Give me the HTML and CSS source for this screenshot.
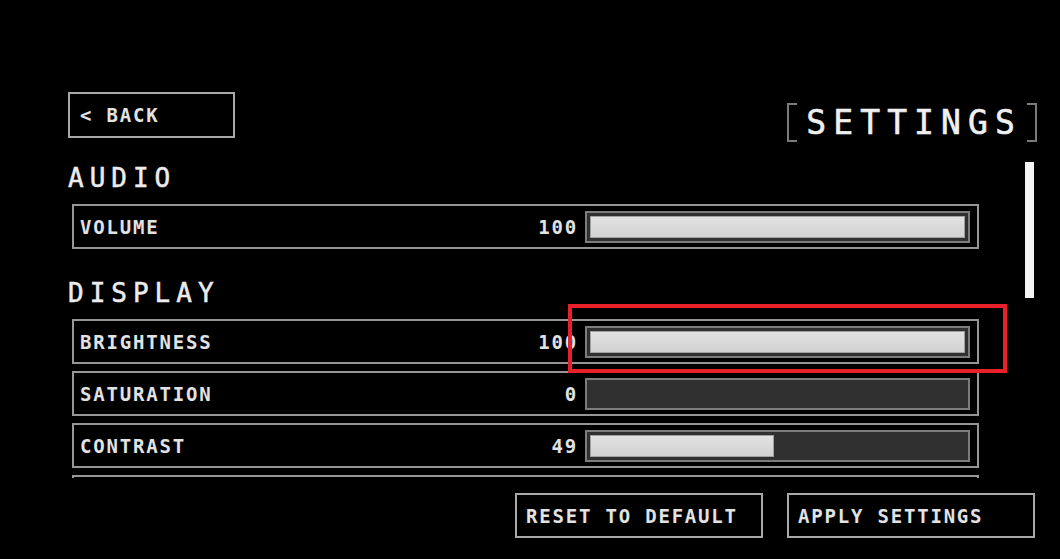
FILE: index.html
```html
<!DOCTYPE html>
<html lang="en">
<head>
<meta charset="utf-8">
<title>Settings</title>
<link rel="stylesheet" href="styles.css">
</head>
<body>
<div class="page">
  <header class="header">
    <button class="btn back-btn"><span class="chev">&lt;</span> BACK</button>
    <h1 class="title">SETTINGS</h1>
  </header>

  <main class="main">
    <div class="scroll">
      <section class="section">
        <h2 class="heading">AUDIO</h2>
        <div class="rows">
          <div class="row">
            <span class="label">VOLUME</span>
            <span class="value">100</span>
            <div class="track"><div class="fill" style="width:100%"></div></div>
          </div>
        </div>
      </section>

      <section class="section section-display">
        <h2 class="heading">DISPLAY</h2>
        <div class="rows">
          <div class="row">
            <span class="label">BRIGHTNESS</span>
            <span class="value">100</span>
            <div class="track"><div class="fill" style="width:100%"></div></div>
          </div>
          <div class="row">
            <span class="label">SATURATION</span>
            <span class="value">0</span>
            <div class="track"><div class="fill fill-empty" style="width:0%"></div></div>
          </div>
          <div class="row">
            <span class="label">CONTRAST</span>
            <span class="value">49</span>
            <div class="track"><div class="fill" style="width:49%"></div></div>
          </div>
          <div class="row row-cut"></div>
        </div>
      </section>
    </div>
    <div class="scrollbar"></div>
  </main>

  <footer class="footer">
    <button class="btn action-btn">RESET TO DEFAULT</button>
    <button class="btn action-btn">APPLY SETTINGS</button>
  </footer>

  <div class="highlight"></div>
</div>
</body>
</html>
```

FILE: styles.css
```css
* { box-sizing: border-box; }

html, body {
  margin: 0;
  padding: 0;
  background: #000;
}

body {
  width: 1060px;
  height: 559px;
  overflow: hidden;
  font-family: "DejaVu Sans Mono", "Liberation Mono", monospace;
  color: #e6e6e6;
}

.page {
  position: relative;
  padding: 92px 25px 0 68px;
}

.header {
  display: flex;
  justify-content: space-between;
  align-items: flex-start;
  height: 48px;
}

.btn {
  font-family: "DejaVu Sans Mono", "Liberation Mono", monospace;
  font-size: 19px;
  font-weight: bold;
  letter-spacing: 1.8px;
  color: #e2e2e2;
  background: #000;
  border: 2px solid #a8a8a8;
  display: flex;
  align-items: center;
  padding: 0 0 0 9px;
  margin: 0;
  text-align: left;
  white-space: pre;
}

.back-btn {
  width: 167px;
  height: 46px;
  padding-left: 10px;
}

.title {
  margin: 13px -2px 0 0;
  display: flex;
  align-items: center;
  height: 35px;
  font-size: 33px;
  font-weight: normal;
  letter-spacing: 7.1px;
  color: #f0f0f0;
  -webkit-text-stroke: 0.6px #f0f0f0;
}

.title::before,
.title::after {
  content: "";
  display: block;
  width: 8px;
  height: 35px;
  border: 2px solid #7a7a7a;
}

.title::before {
  border-right: none;
  margin-right: 9px;
}

.title::after {
  border-left: none;
  margin-left: 5px;
}

.main {
  display: flex;
  align-items: flex-start;
}

.scroll {
  width: 911px;
  height: 338px;
  overflow: hidden;
  padding: 23px 0 0 0;
}

.scrollbar {
  width: 9px;
  height: 136px;
  margin: 22px 0 0 46px;
  background: #f4f4f4;
}

.heading {
  margin: 0 0 11px 0;
  height: 30px;
  line-height: 30px;
  font-size: 26px;
  font-weight: normal;
  letter-spacing: 6px;
  color: #ececec;
  -webkit-text-stroke: 0.5px #ececec;
}

.section-display {
  margin-top: 29px;
}

.rows {
  display: flex;
  flex-direction: column;
  gap: 7px;
  margin-left: 4px;
}

.row {
  display: flex;
  align-items: center;
  height: 45px;
  width: 907px;
  border: 2px solid #969696;
  padding: 0 7px 0 6px;
}

.label {
  flex: 1;
  font-size: 19px;
  font-weight: bold;
  letter-spacing: 1.8px;
  color: #e2e2e2;
}

.value {
  font-size: 19px;
  font-weight: bold;
  letter-spacing: 1.8px;
  margin-right: 7px;
  color: #e2e2e2;
}

.track {
  width: 385px;
  height: 32px;
  border: 2px solid #7c7c7c;
  background: #303030;
  padding: 3px;
  display: flex;
}

.fill {
  height: 100%;
  background: linear-gradient(#e2e2e2, #d2d2d2);
  border: 1px solid #a0a0a0;
}

.fill-empty {
  border: none;
}

.highlight {
  position: absolute;
  left: 568px;
  top: 304px;
  width: 439px;
  height: 69px;
  border: 4px solid #e8202a;
  pointer-events: none;
}

.footer {
  display: flex;
  justify-content: flex-end;
  gap: 24px;
  margin-top: 15px;
}

.action-btn {
  width: 248px;
  height: 45px;
  padding-left: 9px;
}
```
